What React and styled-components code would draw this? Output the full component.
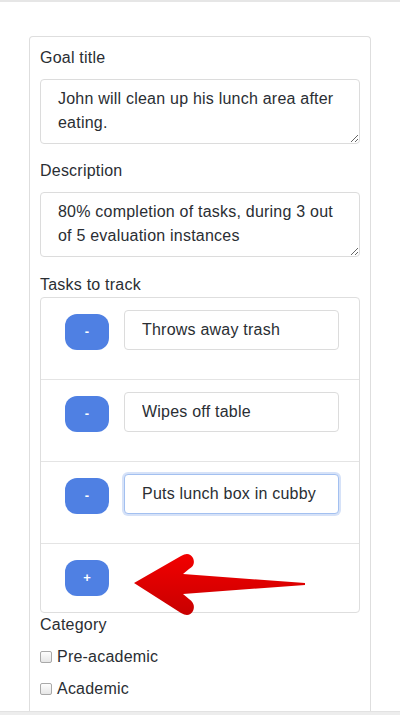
import React from 'react';
import styled, { createGlobalStyle } from 'styled-components';

const GlobalStyle = createGlobalStyle`
  html, body {
    margin: 0;
    padding: 0;
    background: #fff;
  }
  body {
    font-family: "Liberation Sans", Arial, sans-serif;
    color: #2a2e33;
    letter-spacing: 0.22px;
  }
`;

const Page = styled.div`
  display: flex;
  flex-direction: column;
  height: 715px;
  overflow: hidden;
`;

const TopLine = styled.div`
  height: 2px;
  background: #e6e6e6;
  flex-shrink: 0;
`;

const Main = styled.div`
  flex: 1;
  display: flex;
  flex-direction: column;
  padding: 34px 29px 0 29px;
  overflow: hidden;
`;

const Card = styled.div`
  flex: 1;
  border: 1px solid #dedede;
  border-bottom: none;
  border-radius: 4px 4px 0 0;
  padding: 9px 10px 0 10px;
`;

const FormGroup = styled.div`
  margin-bottom: ${p => p.$mb || 15}px;
`;

const Label = styled.div`
  font-size: 16px;
  line-height: 24px;
  margin-bottom: ${p => p.$mb || 0}px;
`;

const TextArea = styled.textarea`
  display: block;
  box-sizing: border-box;
  width: 100%;
  height: 65px;
  margin: 0;
  padding: 7px 17px;
  border: 1px solid #dcdcdc;
  border-radius: 4px;
  font-family: "Liberation Sans", Arial, sans-serif;
  font-size: 16px;
  line-height: 24px;
  letter-spacing: 0.22px;
  color: #2a2e33;
  resize: vertical;
  outline: none;
`;

const TaskBox = styled.div`
  position: relative;
  border: 1px solid #dedede;
  border-radius: 4px;
`;

const TaskRow = styled.div`
  display: flex;
  align-items: flex-start;
  gap: 15px;
  padding: 12px 20px ${p => (p.$last ? 16 : 29)}px 24px;
  border-top: ${p => (p.$first ? 'none' : '1px solid #e4e4e4')};
`;

const RoundButton = styled.button`
  flex-shrink: 0;
  width: 44px;
  height: 36px;
  margin-top: 4px;
  border: none;
  border-radius: 12px;
  background: #4f80e3;
  color: #fff;
  font-family: "Liberation Sans", Arial, sans-serif;
  font-size: 13px;
  font-weight: bold;
  line-height: 36px;
  padding: 0;
  cursor: pointer;
`;

const TaskInput = styled.input`
  flex: 1;
  min-width: 0;
  box-sizing: border-box;
  height: 40px;
  margin: 0;
  padding: 0 17px;
  border: 1px solid ${p => (p.$focused ? '#a3c0f0' : '#dcdcdc')};
  border-radius: 4px;
  box-shadow: ${p => (p.$focused ? '0 0 0 2px #d6e2f8' : 'none')};
  font-family: "Liberation Sans", Arial, sans-serif;
  font-size: 16px;
  letter-spacing: 0.22px;
  color: #2a2e33;
  outline: none;
`;

const Arrow = styled.svg`
  position: absolute;
  left: 90px;
  top: 252px;
  pointer-events: none;
`;

const CheckList = styled.div`
  margin-top: 4px;
`;

const CheckRow = styled.label`
  display: flex;
  align-items: center;
  gap: 5px;
  height: 32px;
  font-size: 16px;
`;

const CheckBox = styled.span`
  width: 10px;
  height: 10px;
  border: 1px solid #a9a9a9;
  border-radius: 2px;
  background: linear-gradient(#fdfdfd, #e6e6e6);
`;

const BottomBar = styled.div`
  height: 3px;
  background: #ededed;
  border-top: 1px solid #e2e2e2;
  flex-shrink: 0;
`;

const tasks = [
  { text: 'Throws away trash' },
  { text: 'Wipes off table' },
  { text: 'Puts lunch box in cubby', focused: true },
];

function App() {
  return (
    <Page>
      <GlobalStyle />
      <TopLine />
      <Main>
        <Card>
          <FormGroup>
            <Label $mb={9}>Goal title</Label>
            <TextArea defaultValue="John will clean up his lunch area after eating." />
          </FormGroup>
          <FormGroup $mb={16}>
            <Label $mb={9}>Description</Label>
            <TextArea defaultValue="80% completion of tasks, during 3 out of 5 evaluation instances" />
          </FormGroup>
          <Label>Tasks to track</Label>
          <TaskBox>
            {tasks.map((t, i) => (
              <TaskRow key={t.text} $first={i === 0}>
                <RoundButton>-</RoundButton>
                <TaskInput defaultValue={t.text} $focused={t.focused} />
              </TaskRow>
            ))}
            <TaskRow $last>
              <RoundButton>+</RoundButton>
            </TaskRow>
            <Arrow width="180" height="70" viewBox="0 0 180 70">
              <defs>
                <linearGradient id="arrowFill" x1="0" y1="0" x2="0" y2="1">
                  <stop offset="0" stopColor="#f20000" />
                  <stop offset="1" stopColor="#c80000" />
                </linearGradient>
              </defs>
              <path
                d="M3 33 L50 6 Q58 1 62 8 Q65 15 58 19 L52 24 L174 33 L174 35 L52 44 L58 49 Q65 54 62 61 Q58 68 50 63 Z"
                fill="url(#arrowFill)"
              />
            </Arrow>
          </TaskBox>
          <Label>Category</Label>
          <CheckList>
            <CheckRow>
              <CheckBox />
              Pre-academic
            </CheckRow>
            <CheckRow>
              <CheckBox />
              Academic
            </CheckRow>
          </CheckList>
        </Card>
      </Main>
      <BottomBar />
    </Page>
  );
}

export default App;
